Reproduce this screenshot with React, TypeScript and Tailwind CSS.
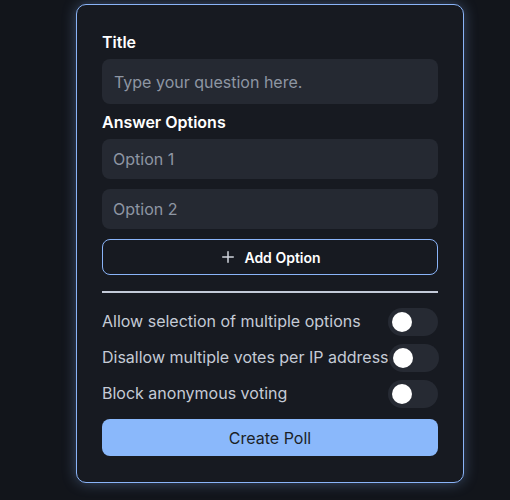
import { Plus } from 'lucide-react';

const toggles = [
  'Allow selection of multiple options',
  'Disallow multiple votes per IP address',
  'Block anonymous voting',
];

function Toggle() {
  return (
    <button className="shrink-0 w-[50px] h-[28px] rounded-full bg-[#262a33] flex items-center px-[4px]">
      <span className="block w-[20px] h-[20px] rounded-full bg-white" />
    </button>
  );
}

export default function App() {
  return (
    <div className="min-h-[500px] bg-[#12151b] pt-[4px] pl-[76px] font-['Inter','Noto_Sans',sans-serif]">
      <div className="w-[388px] h-[479px] rounded-[10px] border border-[#8ab4f8] bg-[#171a21] px-[25px] pt-[25px] shadow-[0_0_14px_rgba(138,180,248,0.35)]">
        <div className="text-white font-semibold text-[16px] leading-6">Title</div>
        <input
          className="mt-[5px] w-full h-[45px] rounded-lg bg-[#252932] px-[12px] text-[16px] text-white placeholder-[#8e96a3] outline-none"
          placeholder="Type your question here."
        />
        <div className="mt-[6px] text-white font-semibold text-[16px] leading-6">Answer Options</div>
        <div className="mt-[5px] flex flex-col gap-[10px]">
          {['Option 1', 'Option 2'].map(o => (
            <input
              key={o}
              className="w-full h-[40px] rounded-lg bg-[#252932] px-[11px] text-[16px] text-white placeholder-[#8e96a3] outline-none"
              placeholder={o}
            />
          ))}
          <button className="w-full h-[36px] rounded-lg border border-[#8ab4f8] flex items-center justify-center gap-[7px] text-white text-[14px] font-semibold">
            <Plus size={18} strokeWidth={2} className="text-[#d0d4dc]" />
            Add Option
          </button>
        </div>
        <div className="mt-[16px] h-[2px] bg-[#c3cad8]" />
        <div className="mt-[15px] flex flex-col gap-[8px]">
          {toggles.map(t => (
            <div key={t} className="flex items-center justify-between">
              <span className="text-[16px] text-[#c5cbd6] leading-6 whitespace-nowrap -mt-[2px]">{t}</span>
              <Toggle />
            </div>
          ))}
        </div>
        <button className="mt-[11px] w-full h-[37px] rounded-lg bg-[#8ab8fb] text-[#1b1f27] text-[16px]">
          Create Poll
        </button>
      </div>
    </div>
  );
}
